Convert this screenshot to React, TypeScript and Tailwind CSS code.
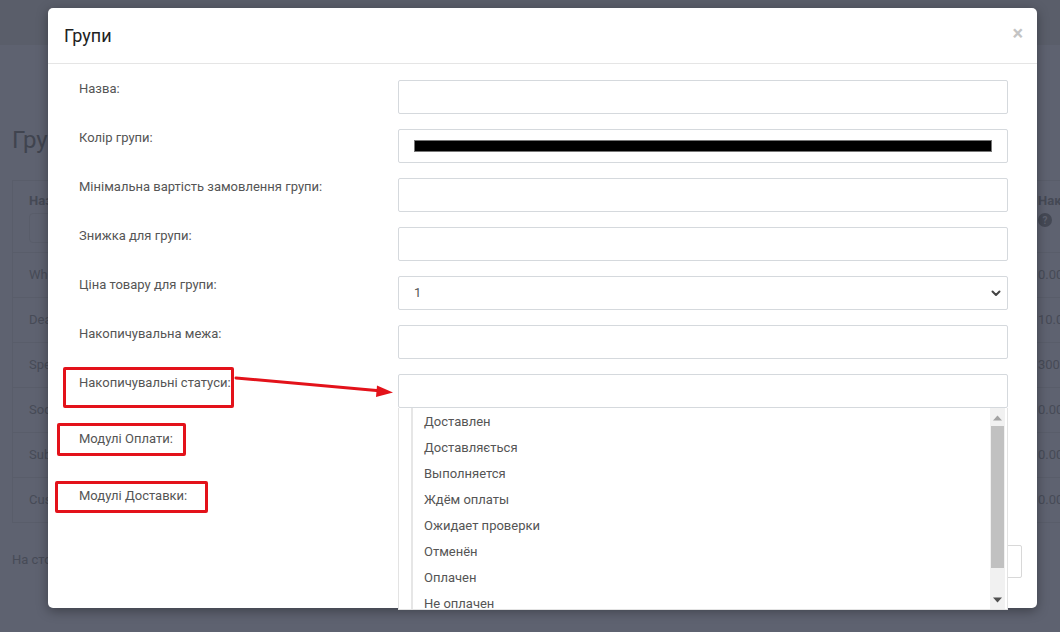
import React from "react";

const rows = [
  { name: "Wholesale", val: "0.00" },
  { name: "Dealer", val: "10.00" },
  { name: "Special", val: "300.00" },
  { name: "Social", val: "0.00" },
  { name: "Subscriber", val: "0.00" },
  { name: "Customer", val: "0.00" },
];

const statuses = [
  "Доставлен",
  "Доставляється",
  "Выполняется",
  "Ждём оплаты",
  "Ожидает проверки",
  "Отменён",
  "Оплачен",
  "Не оплачен",
];

function Field({ label, children }: { label: string; children?: React.ReactNode }) {
  return (
    <div className="flex">
      <div className="w-[319px] shrink-0 text-[13px] leading-[18px] text-[#555]">{label}</div>
      <div className="relative flex-1">{children}</div>
    </div>
  );
}

const inputCls = "h-[34px] w-full rounded-[2px] border border-[#d5d9dd] bg-white";

export default function App() {
  return (
    <div
      className="relative h-[632px] w-[1060px] overflow-hidden bg-[#5e6270]"
      style={{ fontFamily: "Roboto, 'Noto Sans', sans-serif" }}
    >
      {/* background page */}
      <div className="h-[45px] bg-[#5a5e6a]" />
      <div className="pl-[12px]">
        <div className="mt-[81px] text-[24px] leading-[28px] text-[#40444f]">Групи</div>
        <div className="mt-[26px] w-[1080px] border-l border-t border-[#595d6a]">
          <div className="grid h-[72px] grid-cols-[1fr_70px] border-b border-[#595d6a]">
            <div className="pl-[16px] pt-[11px]">
              <div className="text-[13px] font-bold leading-[18px] text-[#454955]">Назва</div>
              <div className="mt-[3px] h-[30px] w-[200px] rounded-[4px] border border-[#595d6a]" />
            </div>
            <div className="pl-[16px] pt-[11px]">
              <div className="text-[13px] font-bold leading-[18px] text-[#454955]">Накопичувальна</div>
              <div className="mt-[3px] flex h-[14px] w-[14px] items-center justify-center rounded-full bg-[#454955] text-[10px] font-bold text-[#5e6270]">?</div>
            </div>
          </div>
          {rows.map((r) => (
            <div key={r.name} className="grid h-[45px] grid-cols-[1fr_70px] items-center border-b border-[#595d6a] text-[13px] text-[#474b57]">
              <div className="pl-[16px]">{r.name}</div>
              <div className="pl-[16px]">{r.val}</div>
            </div>
          ))}
        </div>
        <div className="mt-[27px] text-[13px] text-[#474b57]">На сторінці</div>
      </div>

      {/* modal */}
      <div className="absolute left-[48px] top-[8px] h-[600px] w-[989px] rounded-[5px] bg-white shadow-[0_3px_12px_rgba(0,0,0,0.35)]">
        <div className="flex h-[56px] items-center justify-between border-b border-[#e5e5e5] pl-[16px] pr-[14px]">
          <div className="text-[18px] leading-[22px] text-[#222]">Групи</div>
          <div className="-mt-[6px] text-[20px] font-bold leading-none text-[#c4c4c4]">×</div>
        </div>

        {/* hidden footer button */}
        <div className="absolute right-[15px] top-[537px] flex h-[33px] w-[70px] items-center justify-end rounded-[2px] border border-[#d8d8d8] bg-white pr-[13px]">
          <div className="h-[14px] w-[2px] bg-[#999]" />
        </div>

        <div className="flex flex-col gap-[15px] pl-[31px] pr-[29px] pt-[16px]">
          <Field label="Назва:">
            <div className={inputCls} />
          </Field>
          <Field label="Колір групи:">
            <div className={inputCls + " px-[15px] pt-[10px]"}>
              <div className="h-[12px] w-full border border-[#777] bg-black" />
            </div>
          </Field>
          <Field label="Мінімальна вартість замовлення групи:">
            <div className={inputCls} />
          </Field>
          <Field label="Знижка для групи:">
            <div className={inputCls} />
          </Field>
          <Field label="Ціна товару для групи:">
            <div className={inputCls + " flex items-center justify-between pl-[15px] pr-[5px] text-[13px] text-[#555]"}>
              <span>1</span>
              <svg width="12" height="12" viewBox="0 0 12 12">
                <path d="M2.5 4.5 L6 8 L9.5 4.5" fill="none" stroke="#444" strokeWidth="2" strokeLinecap="round" strokeLinejoin="round" />
              </svg>
            </div>
          </Field>
          <Field label="Накопичувальна межа:">
            <div className={inputCls} />
          </Field>
          <Field label="Накопичувальні статуси:">
            <div className={inputCls} />
            <div className="absolute left-0 right-0 top-[34px] z-10 h-[202px] border-x border-b border-[#e3e3e3] bg-white">
              <div className="ml-[12px] h-full border-l-2 border-[#e6e6e6] pl-[11px] pt-[1px]">
                {statuses.map((s) => (
                  <div key={s} className="text-[13px] leading-[26px] text-[#555]">{s}</div>
                ))}
              </div>
              <div className="absolute bottom-0 right-[2px] top-0 w-[15px] bg-[#f1f1f1]">
                <svg className="absolute left-[3px] top-[7px]" width="9" height="6" viewBox="0 0 9 6">
                  <path d="M0 5.5 L4.5 0.5 L9 5.5 Z" fill="#a3a3a3" />
                </svg>
                <div className="absolute left-[1px] top-[18px] h-[142px] w-[13px] bg-[#c1c1c1]" />
                <svg className="absolute left-[3px] top-[189px]" width="9" height="6" viewBox="0 0 9 6">
                  <path d="M0 0.5 L4.5 5.5 L9 0.5 Z" fill="#505050" />
                </svg>
              </div>
            </div>
          </Field>
          <div className="mt-[7px] h-[42px]">
            <Field label="Модулі Оплати:" />
          </div>
          <Field label="Модулі Доставки:" />
        </div>
      </div>

      {/* red annotations */}
      <div className="absolute left-[63px] top-[367px] h-[41px] w-[171px] rounded-[2px] border-[3px] border-[#e3121a]" />
      <div className="absolute left-[57px] top-[423px] h-[33px] w-[129px] rounded-[2px] border-[3px] border-[#e3121a]" />
      <div className="absolute left-[55px] top-[481px] h-[32px] w-[153px] rounded-[2px] border-[3px] border-[#e3121a]" />
      <svg className="absolute left-[230px] top-[370px]" width="170" height="30" viewBox="0 0 170 30">
        <line x1="6" y1="8" x2="152" y2="21" stroke="#e3121a" strokeWidth="3" strokeLinecap="round" />
        <path d="M163 22.5 L147 15.5 L146 27 Z" fill="#e3121a" />
      </svg>
    </div>
  );
}
